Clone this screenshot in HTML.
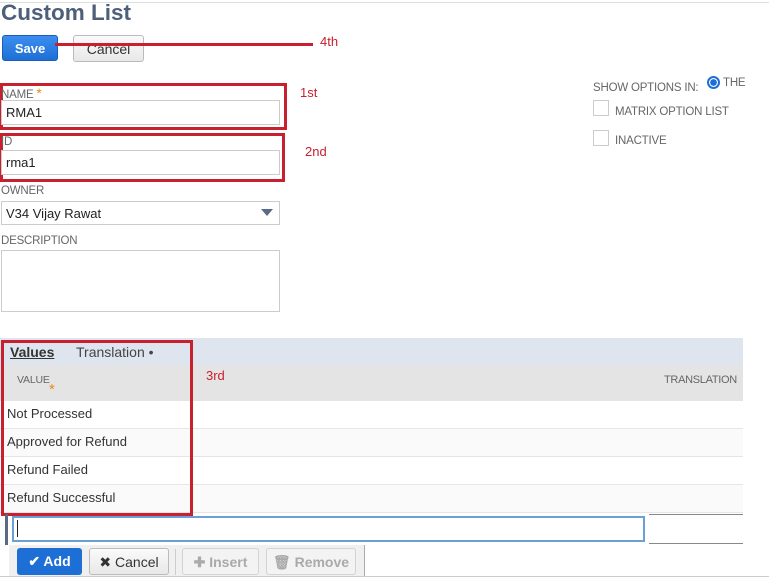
<!DOCTYPE html>
<html><head><meta charset="utf-8"><style>
*{box-sizing:border-box;margin:0;padding:0}
body{width:769px;height:578px;position:relative;overflow:hidden;background:#fff;font-family:"Liberation Sans",sans-serif;color:#333}
.a{position:absolute}
.lbl{font-size:11.5px;color:#666;letter-spacing:-0.2px}
.inp{border:1px solid #ccc;background:#fff;font-size:13px;color:#222;padding-left:4px;line-height:23px}
.red{border:3px solid #c8202e}
.rt{color:#c8202e;font-size:13px}
.row{left:0;width:743px;height:28px;font-size:13px;padding-left:7px;line-height:26px;border-bottom:1px solid #e6e6e6}
.btn{border-radius:3px;font-size:13px;font-weight:bold;text-align:center;line-height:26px}
.gb{background:linear-gradient(#fafafa,#e8e8e8);border:1px solid #bbb;color:#333}
.db{background:#f3f3f3;border:1px solid #d3d3d3;color:#aaa}
</style></head><body>
<div class="a" style="left:0;top:2px;width:769px;height:1px;background:#ddd"></div>
<div class="a" style="left:1px;top:0px;font-size:22.5px;font-weight:bold;color:#4d5f79">Custom List</div>
<div class="a btn" style="left:2px;top:35px;width:56px;height:26px;background:linear-gradient(#3d8ef0,#1d6fd6);color:#fff;border:1px solid #1a5eb8">Save</div>
<div class="a btn gb" style="left:73px;top:35px;width:71px;height:27px;font-weight:normal;font-size:14px">Cancel</div>
<div class="a" style="left:55px;top:43px;width:258px;height:3px;background:#c8202e"></div>
<div class="a rt" style="left:320px;top:34px">4th</div>

<div class="a red" style="left:0;top:83px;width:287px;height:47px"></div>
<div class="a lbl" style="left:1px;top:85px">NAME <span style="color:#e38c1e;font-size:14px">*</span></div>
<div class="a inp" style="left:1px;top:100px;width:279px;height:25px">RMA1</div>
<div class="a rt" style="left:300px;top:85px">1st</div>

<div class="a red" style="left:0;top:133px;width:285px;height:49px"></div>
<div class="a lbl" style="left:1px;top:136px">ID</div>
<div class="a inp" style="left:1px;top:150px;width:279px;height:25px">rma1</div>
<div class="a rt" style="left:305px;top:144px">2nd</div>

<div class="a lbl" style="left:1px;top:185px">OWNER</div>
<div class="a inp" style="left:1px;top:201px;width:279px;height:24px">V34 Vijay Rawat</div>
<div class="a" style="left:261px;top:209px;width:0;height:0;border-left:6px solid transparent;border-right:6px solid transparent;border-top:7px solid #5a6b85"></div>
<div class="a lbl" style="left:1px;top:235px">DESCRIPTION</div>
<div class="a inp" style="left:1px;top:250px;width:279px;height:62px"></div>

<div class="a lbl" style="left:593px;top:82px">SHOW OPTIONS IN:</div>
<div class="a" style="left:707px;top:76px;width:13px;height:13px;border-radius:50%;border:2px solid #1d6fd6;background:radial-gradient(#1d6fd6 50%,#fff 55%)"></div>
<div class="a lbl" style="left:723px;top:77px">THE</div>
<div class="a" style="left:593px;top:100px;width:16px;height:16px;border:1px solid #ccc"></div>
<div class="a lbl" style="left:615px;top:106px">MATRIX OPTION LIST</div>
<div class="a" style="left:593px;top:130px;width:16px;height:16px;border:1px solid #ccc"></div>
<div class="a lbl" style="left:615px;top:135px">INACTIVE</div>

<div class="a" style="left:0;top:338px;width:743px;height:27px;background:#dfe5ef"></div>
<div class="a" style="left:10px;top:344px;font-size:14px;font-weight:bold;color:#333;text-decoration:underline;text-decoration-thickness:1px">Values</div>
<div class="a" style="left:76px;top:344px;font-size:14px;color:#444">Translation •</div>
<div class="a" style="left:0;top:365px;width:743px;height:36px;background:#e4e4e4"></div>
<div class="a lbl" style="left:17px;top:374px;font-size:10.5px">VALUE</div>
<div class="a" style="left:49px;top:381px;color:#e38c1e;font-size:15px">*</div>
<div class="a lbl" style="left:664px;top:374px;font-size:11px;letter-spacing:-0.3px">TRANSLATION</div>
<div class="a row" style="top:401px;background:#fff">Not Processed</div>
<div class="a row" style="top:429px;background:#fafafa">Approved for Refund</div>
<div class="a row" style="top:457px;background:#fff">Refund Failed</div>
<div class="a row" style="top:485px;background:#fafafa">Refund Successful</div>
<div class="a red" style="left:1px;top:340px;width:192px;height:176px"></div>
<div class="a rt" style="left:206px;top:368px">3rd</div>

<div class="a" style="left:5px;top:514px;width:3px;height:31px;background:#5c6a80"></div>
<div class="a" style="left:12px;top:516px;width:633px;height:26px;border:2px solid #6a9fd8;background:#fff"></div>
<div class="a" style="left:17px;top:520px;width:1px;height:17px;background:#222"></div>
<div class="a" style="left:649px;top:514px;width:94px;height:1px;background:#888"></div>
<div class="a" style="left:649px;top:543px;width:94px;height:1px;background:#888"></div>
<div class="a" style="left:9px;top:545px;width:356px;height:31px;background:#f0f0f0;border-right:1px solid #aaa"></div>
<div class="a btn" style="left:17px;top:548px;width:65px;height:27px;background:#1d6fd6;color:#fff;font-size:14px">✔ Add</div>
<div class="a btn gb" style="left:89px;top:548px;width:80px;height:27px;font-size:14px;font-weight:normal">✖ Cancel</div>
<div class="a" style="left:175px;top:549px;width:1px;height:26px;background:#ccc"></div>
<div class="a btn db" style="left:182px;top:548px;width:77px;height:27px;font-size:14px">✚ Insert</div>
<div class="a btn db" style="left:266px;top:548px;width:90px;height:27px;font-size:14px">🗑 Remove</div>
<div class="a" style="left:0;top:576px;width:769px;height:1px;background:#ccc"></div>
</body></html>
